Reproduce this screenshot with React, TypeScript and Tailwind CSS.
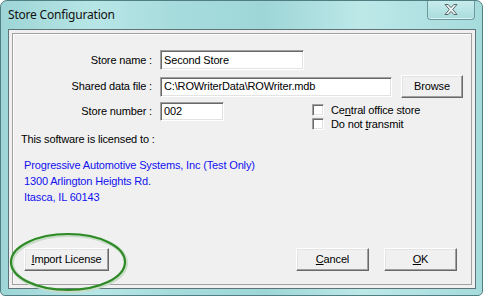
import React from 'react';

const sunken =
  'bg-white border border-t-[#a0a0a0] border-l-[#a0a0a0] border-b-white border-r-white shadow-[inset_1px_1px_0_#696969,inset_-1px_-1px_0_#e3e3e3]';
const raised =
  'bg-[#f0f0f0] border border-t-white border-l-white border-b-[#696969] border-r-[#696969] shadow-[inset_-1px_-1px_0_#a0a0a0,inset_1px_1px_0_#e3e3e3]';

const Field = ({ label, value, width, height = 'h-[20px]' }: { label: string; value: string; width: string; height?: string }) => (
  <>
    <span className="w-[140px] text-right pr-[1px] shrink-0">{label}</span>
    <div className={`ml-[7px] ${width} ${height} ${sunken} flex items-center pl-[3px] text-black`}>{value}</div>
  </>
);

const CheckBox = ({ children }: { children: React.ReactNode }) => (
  <div className="flex items-center h-[14px]">
    <div className={`w-[12px] h-[12px] ${sunken}`} />
    <span className="ml-[7px]">{children}</span>
  </div>
);

const Button = ({ children, w }: { children: React.ReactNode; w: string }) => (
  <div className={`${w} h-[23px] ${raised} flex items-center justify-center`}>{children}</div>
);

export default function App() {
  return (
    <div className="relative w-[483px] h-[296px] overflow-hidden rounded-t-[7px] rounded-b-[5px] border border-[#4f7f83] bg-[linear-gradient(90deg,#9dd5d6_0%,#b8e6e6_20%,#a7dcdd_35%,#9ed6d7_55%,#bde8e8_75%,#a6dbdc_100%)] font-['Liberation_Sans',Arial,sans-serif] text-[11px] tracking-[-0.15px] text-black">
      {/* title bar */}
      <div className="h-[28px] flex items-center pl-[7px] font-['Noto_Sans',sans-serif] text-[12px] tracking-[-0.2px] text-[#111]">
        Store Configuration
      </div>
      <div className="absolute top-[-1px] right-[7px] w-[48px] h-[20px] rounded-b-[4px] border border-t-0 border-[#6c9a9c] bg-[linear-gradient(180deg,#c9eded_0%,#a9dcdd_100%)] shadow-[inset_0_-1px_0_#dff5f5] flex items-center justify-center">
        <svg width="16" height="13" viewBox="0 0 16 13">
          <path
            d="M2 1.5h3.2L8 4.6l2.8-3.1H14L9.7 6.5 14 11.5h-3.2L8 8.4l-2.8 3.1H2l4.3-5z"
            fill="#eef3f3"
            stroke="#56676a"
            strokeWidth="1"
            strokeLinejoin="round"
          />
        </svg>
      </div>

      {/* client area */}
      <div className="ml-[7px] mr-[6px] h-[260px] border border-[#5f7378] bg-[#f0f0f0] p-[3px]">
        <div className="h-[252px] border border-[#a0a0a0] shadow-[inset_1px_1px_0_#fff] flex flex-col">
          <div className="mt-[16px] flex items-center">
            <Field label="Store name :" value="Second Store" width="w-[144px]" />
          </div>
          <div className="mt-[5px] flex items-center">
            <Field label="Shared data file :" value="C:\ROWriterData\ROWriter.mdb" width="w-[232px]" />
            <div className="ml-[9px]">
              <Button w="w-[62px]">Browse</Button>
            </div>
          </div>
          <div className="mt-[4px] flex items-start">
            <div className="flex items-center">
              <Field label="Store number :" value="002" width="w-[64px]" height="h-[19px]" />
            </div>
            <div className="ml-[88px] mt-[1px] flex flex-col">
              <CheckBox>
                Ce<span className="underline">n</span>tral office store
              </CheckBox>
              <CheckBox>
                Do not <span className="underline">t</span>ransmit
              </CheckBox>
            </div>
          </div>
          <div className="mt-[2px] ml-[8px] leading-[13px]">This software is licensed to :</div>
          <div className="mt-[11px] ml-[11px] leading-[16px] text-[#1010f0]">
            <div>Progressive Automotive Systems, Inc (Test Only)</div>
            <div>1300 Arlington Heights Rd.</div>
            <div>Itasca, IL 60143</div>
          </div>
          <div className="mt-auto mb-[13px] flex items-center">
            <div className="ml-[11px]">
              <Button w="w-[85px]">
                <span>
                  <span className="underline">I</span>mport License
                </span>
              </Button>
            </div>
            <div className="ml-auto flex gap-[15px] mr-[14px]">
              <Button w="w-[73px]">
                <span>
                  <span className="underline">C</span>ancel
                </span>
              </Button>
              <Button w="w-[73px]">
                <span>
                  <span className="underline">O</span>K
                </span>
              </Button>
            </div>
          </div>
        </div>
      </div>

      {/* green highlight ellipse */}
      <svg className="absolute left-0 top-[228px]" width="140" height="68" viewBox="0 0 140 68">
        <ellipse cx="67" cy="33" rx="57" ry="28" fill="none" stroke="#c8dcc8" strokeWidth="4" transform="translate(1 1)" />
        <ellipse cx="67" cy="33" rx="57" ry="28" fill="none" stroke="#2d8a25" strokeWidth="2.2" />
      </svg>
    </div>
  );
}
